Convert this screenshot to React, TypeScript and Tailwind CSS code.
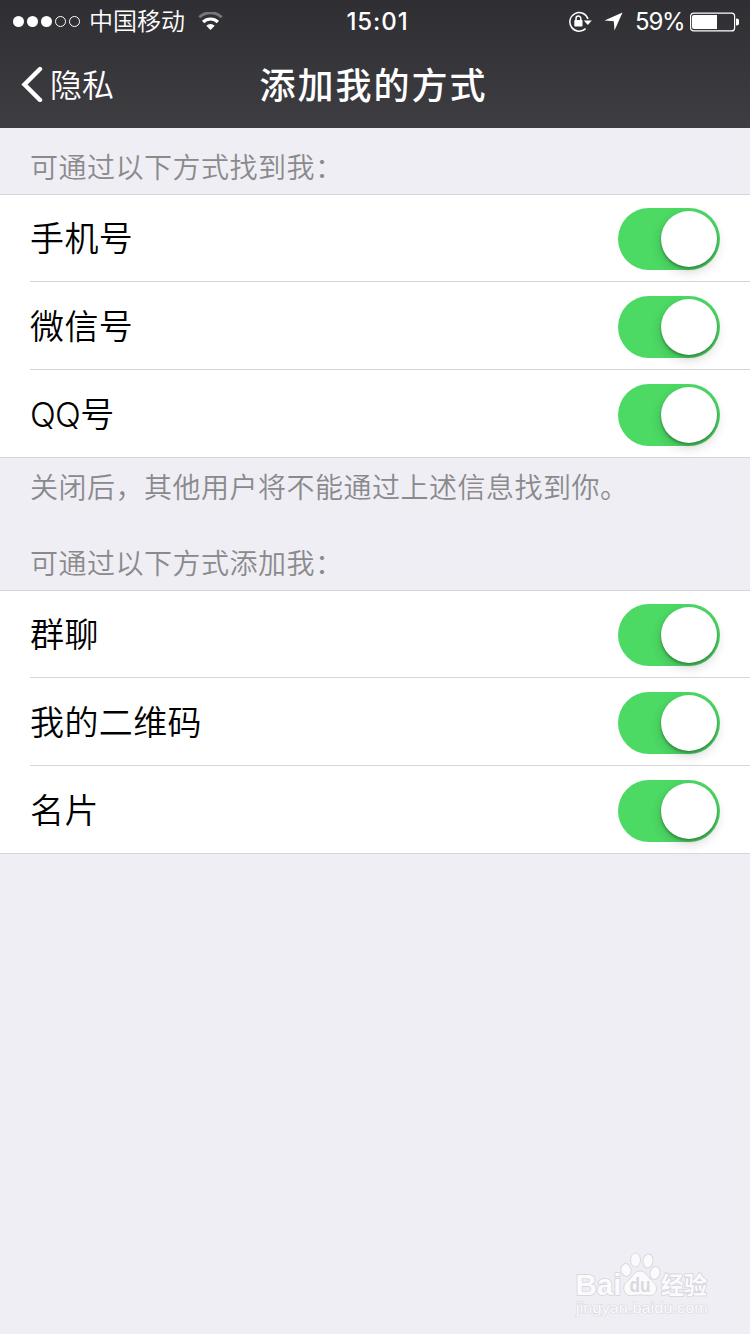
import React from 'react';

const foundBy = ['手机号', '微信号', 'QQ号'];
const addedBy = ['群聊', '我的二维码', '名片'];

const StatusBar: React.FC = () => (
  <div className="grid grid-cols-3 h-10 items-center">
    <div className="flex items-center pl-[13px]">
      <svg width="68" height="12" viewBox="0 0 68 12" fill="#fff">
        <circle cx="5.5" cy="6.5" r="5.5" />
        <circle cx="19.5" cy="6.5" r="5.5" />
        <circle cx="33.5" cy="6.5" r="5.5" />
        <circle cx="47.5" cy="6.5" r="5" fill="none" stroke="#fff" />
        <circle cx="61.5" cy="6.5" r="5" fill="none" stroke="#fff" />
      </svg>
      <span className="ml-2 pt-0.5 text-2xl leading-10 font-[350] whitespace-nowrap">中国移动</span>
      <svg className="ml-[13px]" width="25" height="18" viewBox="0 0 25 18" fill="none">
        <path d="M1.3 5.3a16 16 0 0 1 22.4 0" stroke="#77767b" strokeWidth="3" />
        <path d="M5.1 10a10.6 10.6 0 0 1 14.8 0" stroke="#fff" strokeWidth="3.2" />
        <path d="M12.5 18l-4.2-4.3a5.9 5.9 0 0 1 8.4 0z" fill="#fff" />
      </svg>
    </div>
    <div className="text-center pt-px text-2xl leading-10 font-medium tracking-[0.9px] pl-[5px]">15:01</div>
    <div className="flex items-center justify-end pt-px pr-[11px]">
      <svg width="24" height="22" viewBox="0 0 24 22" fill="none">
        <path d="M20 8A9.3 9.3 0 1 0 17.6 17.6" stroke="#fff" strokeWidth="1.5" />
        <path d="M15.8 9.5h8L19.8 14z" fill="#fff" />
        <path d="M8 9.5V7.4a2.4 2.4 0 0 1 4.8 0v2.1" stroke="#fff" strokeWidth="1.5" />
        <rect x="6.3" y="9" width="8.2" height="6.6" rx="0.8" fill="#fff" />
      </svg>
      <svg className="ml-3" width="19" height="19" viewBox="0 0 19 19" fill="#fff">
        <path d="M18.5 0.5L0.5 8.5l9.3 0.8 0.7 9.2z" />
      </svg>
      <span className="ml-3 -mr-px w-[50px] text-2xl leading-10 whitespace-nowrap tracking-[-1.2px]">59%</span>
      <svg className="ml-1.5" width="49" height="20" viewBox="0 0 49 20" fill="none">
        <rect x="0.6" y="1.1" width="44" height="17.8" rx="3" stroke="#fff" strokeWidth="1.2" />
        <path d="M4 3h23v14H4a2 2 0 0 1-2-2V5a2 2 0 0 1 2-2z" fill="#fff" />
        <path d="M46 6.5a3.5 3.5 0 0 1 0 7z" fill="#fff" />
      </svg>
    </div>
  </div>
);

const NavBar: React.FC = () => (
  <div className="grid grid-cols-[1fr_auto_1fr] h-[88px] items-center pl-[21px] pr-[24px]">
    <button className="flex items-center text-[32px] font-[350]">
      <svg width="22" height="36" viewBox="0 0 22 36" fill="none">
        <path d="M19 3L3.5 18.5 19 34" stroke="#fff" strokeWidth="4.4" strokeLinecap="round" />
      </svg>
      <span className="ml-[7px] pt-[3px] leading-[44px]">隐私</span>
    </button>
    <h1 className="pt-[3px] text-[36px] leading-[44px] font-medium tracking-[2px]">添加我的方式</h1>
  </div>
);

const Switch: React.FC = () => (
  <button role="switch" aria-checked="true" className="w-[102px] h-[62px] rounded-full bg-[#4cd964] p-[3px] flex justify-end">
    <span className="size-14 rounded-full bg-white shadow-[0_5px_12px_rgba(0,0,0,0.16),0_2px_3px_rgba(0,0,0,0.3)]" />
  </button>
);

const SettingList: React.FC<{ items: string[] }> = ({ items }) => (
  <ul className="bg-white shadow-[inset_0_1px_0_#d6d5d9,inset_0_-1px_0_#d6d5d9]">
    {items.map((label, i) => (
      <li
        key={label}
        className={`ml-[30px] h-[88px] pt-3.5 pr-[30px] flex items-start justify-between ${
          i < items.length - 1 ? 'border-b border-[#d6d5d9]' : ''
        }`}
      >
        <span
          className={`text-[34px] leading-[62px] font-[350] text-black ${
            label.startsWith('QQ') ? 'tracking-[-0.7px]' : 'tracking-[0.4px]'
          }`}
        >
          {label}
        </span>
        <Switch />
      </li>
    ))}
  </ul>
);

const SectionTitle: React.FC<{ children: React.ReactNode }> = ({ children }) => (
  <h2 className="h-[66px] pt-[13px] pl-[30px] text-[28px] leading-[54px] tracking-[0.5px] font-[350] text-[#8a8a8d]">{children}</h2>
);

const Watermark: React.FC = () => (
  <svg className="mt-auto ml-[570px] mb-3" width="150" height="72" viewBox="570 1250 150 72">
    <g fill="#fbfbfe" stroke="#d9d8dd" strokeWidth="1">
      <ellipse cx="626" cy="1270" rx="5" ry="6.5" transform="rotate(-12 626 1270)" />
      <ellipse cx="635.5" cy="1260" rx="5" ry="7" />
      <ellipse cx="648" cy="1261" rx="5" ry="7" transform="rotate(8 648 1261)" />
      <ellipse cx="655" cy="1273" rx="5" ry="6.5" transform="rotate(15 655 1273)" />
      <path d="M640 1271c-6 0-7 5-11 9-4 3-6 6-5 10 1 5 5 6 9 5.5 5-.7 9-.7 14 0 5 .6 9-1 9.5-6 .4-4-2-6-5-9-4-4-6-9.5-11.5-9.5z" />
    </g>
    <g fill="#fbfbfe" stroke="#d5d4d9" strokeWidth="1.6" paintOrder="stroke">
      <text x="575.5" y="1295" className="text-[30px] font-bold" fontFamily="Liberation Sans, sans-serif" textLength="46" lengthAdjust="spacingAndGlyphs">Bai</text>
      <text x="661" y="1294" className="text-[24px] font-bold" textLength="46" lengthAdjust="spacingAndGlyphs">经验</text>
    </g>
    <text x="629.5" y="1292" className="text-[20px] font-bold" fontFamily="Liberation Sans, sans-serif" fill="#d9d8dd" textLength="21" lengthAdjust="spacingAndGlyphs">du</text>
    <text x="576" y="1312.5" className="text-[15px]" fontFamily="Liberation Sans, sans-serif" fill="#fbfbfe" stroke="#d9d8dd" strokeWidth="1.2" paintOrder="stroke" textLength="132" lengthAdjust="spacingAndGlyphs">jingyan.baidu.com</text>
  </svg>
);

const App: React.FC = () => (
  <div className="w-[750px] h-[1334px] flex flex-col overflow-hidden bg-[#efeef4] font-[Inter,'Noto_Sans_CJK_SC',sans-serif]">
    <header className="h-32 text-white bg-linear-to-b from-[#2f2e33] to-[#3e3d42]">
      <StatusBar />
      <NavBar />
    </header>
    <SectionTitle>可通过以下方式找到我：</SectionTitle>
    <SettingList items={foundBy} />
    <p className="h-[66px] pt-[3px] pl-[30px] text-[28px] leading-[54px] tracking-[0.5px] font-[350] text-[#8a8a8d]">
      关闭后，其他用户将不能通过上述信息找到你。
    </p>
    <SectionTitle>可通过以下方式添加我：</SectionTitle>
    <SettingList items={addedBy} />
    <Watermark />
  </div>
);

export default App;
